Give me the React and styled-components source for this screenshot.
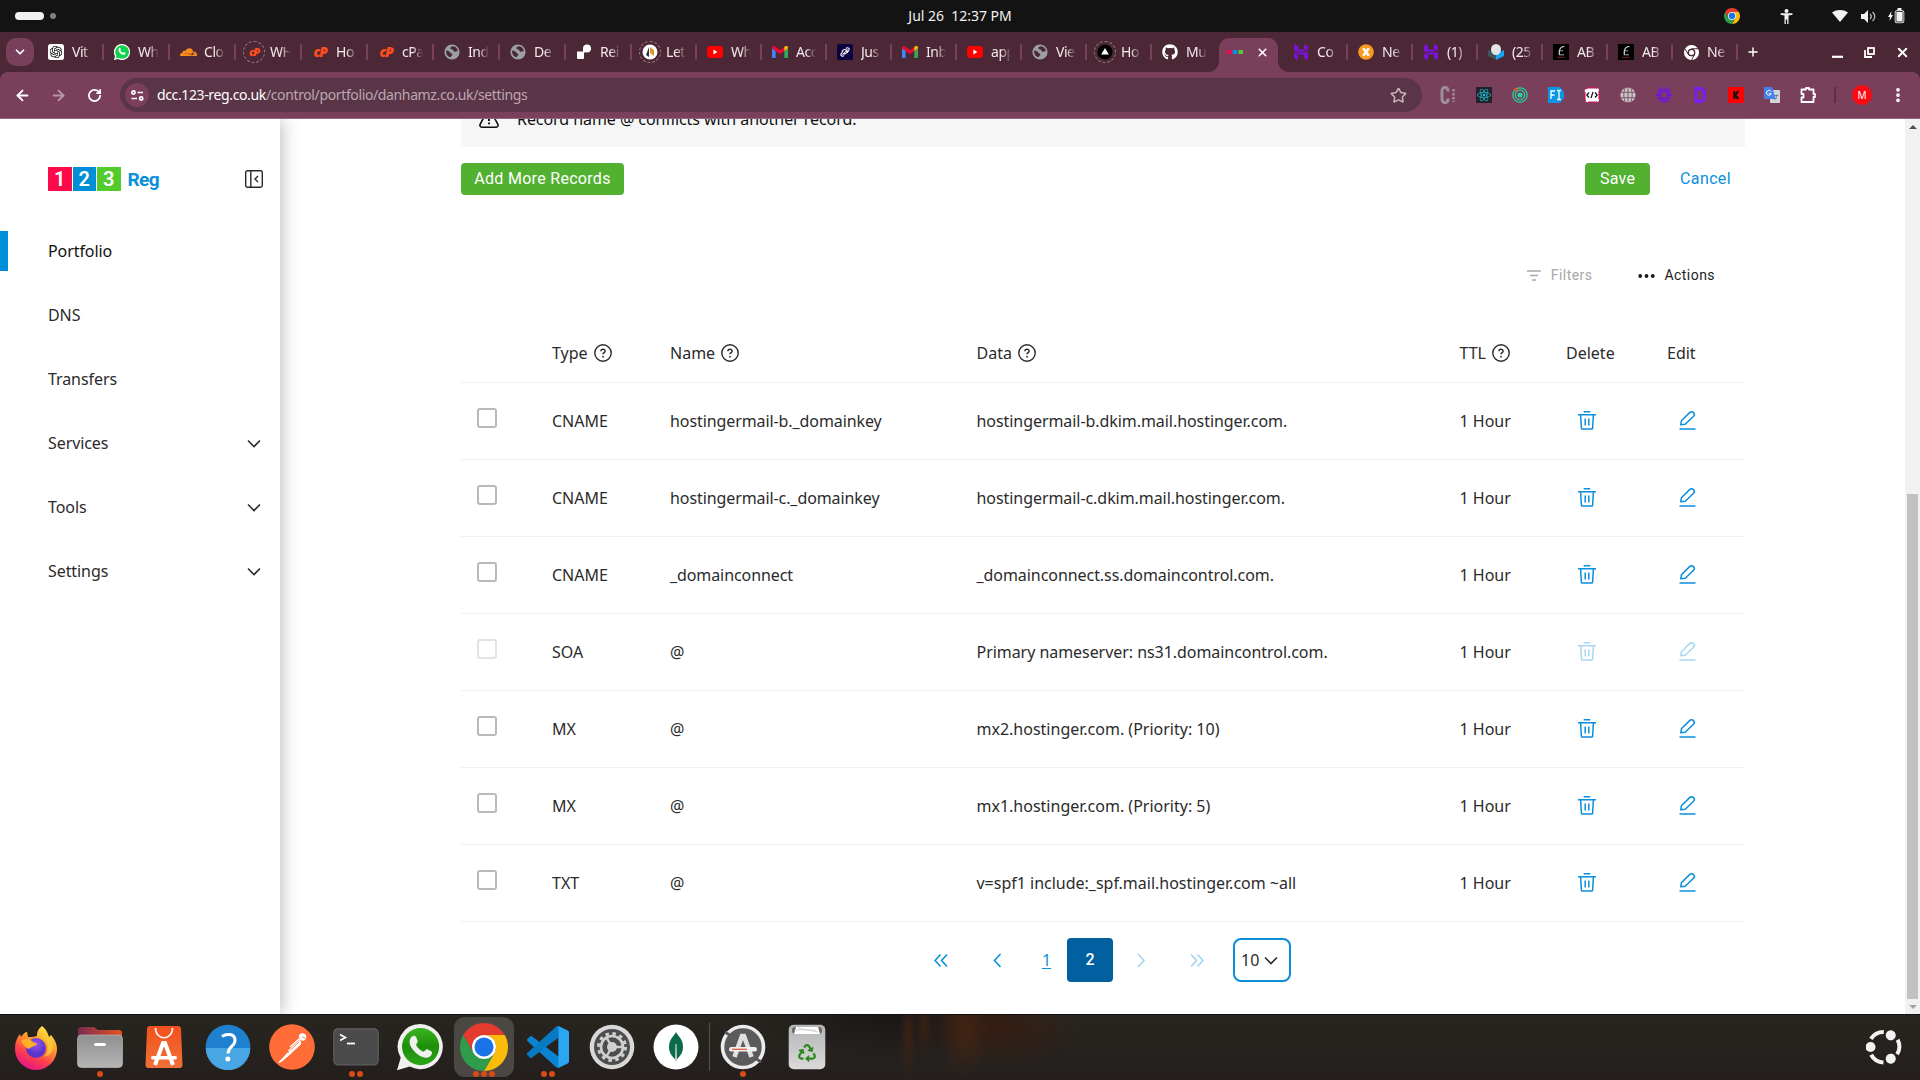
import React from "react";
import styled, { createGlobalStyle, css } from "styled-components";
import { FaGithub, FaReact, FaCloudflare, FaRecycle } from "react-icons/fa";
import { SiOpenai, SiHostinger } from "react-icons/si";
import { ArrowLeft, ArrowRight, RotateCw, Star, EllipsisVertical, Plus, X, ChevronDown } from "lucide-react";

const Global = createGlobalStyle`
  * { box-sizing: border-box; }
  body { margin: 0; background: #fff; overflow: hidden; }
  svg { display: block; flex: none; }
`;

const sans = `"Noto Sans", "Open Sans", sans-serif`;
const rounded = `Roboto, "Noto Sans", sans-serif`;

/* ---------- desktop shell ---------- */
const Screen = styled.div`
  width: 1920px;
  height: 1080px;
  display: flex;
  flex-direction: column;
  font-family: ${sans};
  font-size: 16px;
  color: #2b2b2b;
  overflow: hidden;
`;

const SystemBar = styled.header`
  height: 32px;
  background: #131313;
  color: #f2f2f2;
  display: grid;
  grid-template-columns: 1fr auto 1fr;
  align-items: center;
`;
const Workspaces = styled.div`
  display: flex;
  align-items: center;
  gap: 6px;
  padding-left: 15px;
`;
const WorkspacePill = styled.span`
  width: 29px;
  height: 8px;
  border-radius: 4px;
  background: #f2f2f2;
`;
const WorkspaceDot = styled.span`
  width: 6px;
  height: 6px;
  border-radius: 50%;
  background: #808080;
`;
const Clock = styled.div`
  padding-bottom: 2px;
  font-size: 14px;
  letter-spacing: -0.02px;
  white-space: pre;
`;
const Tray = styled.div`
  display: flex;
  justify-content: flex-end;
  align-items: center;
  padding-right: 10px;
`;
const TrayIcon = styled.span`
  width: ${(p) => p.$w}px;
  margin-right: ${(p) => p.$after || 0}px;
  display: flex;
  justify-content: center;
`;

/* ---------- browser ---------- */
const TabStrip = styled.div`
  height: 40px;
  background: #4c2836;
  display: flex;
  align-items: flex-end;
  padding-left: 6px;
`;
const TabSearch = styled.button`
  width: 28px;
  height: 28px;
  margin: 0 4px 6px 0;
  padding: 0;
  border: 0;
  border-radius: 10px;
  background: #7a3f5b;
  color: #fff;
  display: grid;
  place-items: center;
`;
const Tab = styled.div`
  width: ${(p) => p.$w}px;
  height: 40px;
  padding-left: 10px;
  display: flex;
  align-items: center;
`;
const Favicon = styled.span`
  width: 16px;
  height: 16px;
  display: flex;
  align-items: center;
  justify-content: center;
  flex: none;
`;
const CpanelMark = styled.span`
  color: #ff4f1f;
  font: italic 800 ${(p) => p.$size}px/14px "Open Sans", ${sans};
  letter-spacing: -1.2px;
`;
const Ring = styled.span`
  width: 22px;
  height: 22px;
  margin: -3px;
  border: 1.5px dashed #917883;
  border-radius: 50%;
  display: flex;
  align-items: center;
  justify-content: center;
  flex: none;
`;
const TabTitle = styled.span`
  width: 21px;
  margin-left: 8px;
  font-size: 14px;
  line-height: 20px;
  letter-spacing: -0.45px;
  white-space: nowrap;
  overflow: hidden;
  color: #f3e9ee;
  mask-image: linear-gradient(to right, #000 50%, transparent 100%);
`;
const TabDivider = styled.span`
  width: 2px;
  height: 16px;
  margin-left: ${(p) => p.$gap}px;
  background: #7a3f5b;
`;
const ActiveTab = styled.div`
  width: 59px;
  height: 34px;
  margin: 0 5px 0 2px;
  padding: 0 9px 6px 8px;
  border-radius: 10px 10px 0 0;
  background: #7a3f5b;
  color: #fff;
  display: flex;
  align-items: center;
  justify-content: space-between;
  position: relative;
  &::before, &::after {
    content: "";
    position: absolute;
    bottom: 0;
    width: 10px;
    height: 10px;
  }
  &::before { left: -10px; background: radial-gradient(circle at 0 0, transparent 9.5px, #7a3f5b 10px); }
  &::after { right: -10px; background: radial-gradient(circle at 100% 0, transparent 9.5px, #7a3f5b 10px); }
`;
const WindowControls = styled.div`
  height: 40px;
  margin-left: auto;
  padding-right: 1px;
  display: flex;
  align-items: center;
  color: #fff;
`;
const ControlSlot = styled.span`
  width: ${(p) => p.$w}px;
  display: grid;
  place-items: center;
`;
const NewTab = styled.span`
  height: 40px;
  margin-left: 8px;
  color: #fff;
  display: grid;
  place-items: center;
`;

const ToolbarBack = styled.div`
  background: #4c2836;
`;
const Toolbar = styled.div`
  height: 47px;
  background: #7a3f5b;
  border-radius: 8px 8px 0 0;
  border-bottom: 1px solid #94627a;
  display: flex;
  align-items: center;
  padding-left: 4px;
  color: #fff;
`;
const NavButton = styled.span`
  width: 36px;
  display: grid;
  place-items: center;
  opacity: ${(p) => (p.$dim ? 0.45 : 1)};
`;
const Omnibox = styled.div`
  width: 1302px;
  height: 34px;
  margin-left: 8px;
  padding: 0 15px 0 5px;
  border-radius: 17px;
  background: #5a3547;
  display: flex;
  align-items: center;
`;
const SiteInfo = styled.span`
  width: 24px;
  height: 24px;
  border-radius: 50%;
  background: #7a3f5b;
  display: grid;
  place-items: center;
`;
const Url = styled.span`
  flex: 1;
  margin-left: 8px;
  padding-bottom: 2px;
  font-size: 14px;
  letter-spacing: -0.37px;
  color: #bda6b1;
  b { font-weight: 400; color: #fff; }
`;
const Extensions = styled.div`
  display: flex;
  margin-left: 8px;
`;
const Extension = styled.span`
  width: 36px;
  display: grid;
  place-items: center;
`;
const ToolbarDivider = styled.span`
  width: 2px;
  height: 16px;
  margin-left: 8px;
  background: #5a3045;
`;
const Avatar = styled.span`
  width: 20px;
  height: 20px;
  margin: 0 17px 0 16px;
  border-radius: 50%;
  background: #fb0a12;
  font-size: 10px;
  line-height: 20px;
  text-align: center;
`;

/* ---------- page ---------- */
const Viewport = styled.div`
  height: 895px;
  display: flex;
  background: #fff;
  overflow: hidden;
`;
const Sidebar = styled.aside`
  width: 280px;
  box-shadow: 0 0 18px rgba(0, 0, 0, 0.32);
  background: #fff;
`;
const BrandRow = styled.div`
  height: 24px;
  margin: 48px 17px 0 48px;
  display: flex;
  align-items: flex-start;
  font-family: ${rounded};
`;
const BrandDigit = styled.span`
  width: 23.5px;
  height: 24px;
  margin-right: 1px;
  background: ${(p) => p.$bg};
  color: #fff;
  font-size: 20px;
  font-weight: 600;
  line-height: 24px;
  text-align: center;
`;
const BrandName = styled.span`
  margin-left: 6px;
  flex: 1;
  color: #0a90da;
  font-size: 19px;
  font-weight: 700;
  line-height: 25px;
  letter-spacing: -0.6px;
`;
const CollapseButton = styled.span`
  margin-top: 3px;
`;
const Nav = styled.nav`
  margin-top: 28px;
`;
const NavItem = styled.div`
  height: 64px;
  padding: 0 19px 0 40px;
  display: flex;
  align-items: center;
  justify-content: space-between;
  letter-spacing: -0.08px;
  color: ${(p) => (p.$active ? "#111" : "#2b2b2b")};
  &::before {
    content: "";
    width: 8px;
    height: 40px;
    margin-left: -40px;
    margin-right: 40px;
    background: ${(p) => (p.$active ? "#008ed6" : "transparent")};
  }
`;
const NavLabel = styled.span`
  flex: 1;
`;
const Main = styled.main`
  width: 1284px;
  margin-left: 181px;
`;
const Notice = styled.div`
  height: 28px;
  padding-left: 18px;
  background: #f6f6f6;
  color: #111;
  display: flex;
  align-items: flex-start;
  overflow: hidden;
`;
const NoticeText = styled.span`
  margin: -12px 0 0 18px;
  line-height: 24px;
  letter-spacing: -0.06px;
`;
const NoticeIcon = styled.span`
  margin-top: -10px;
`;
const FormActions = styled.div`
  margin-top: 16px;
  display: flex;
  align-items: center;
  font-family: ${rounded};
`;
const GreenButton = styled.button`
  width: ${(p) => p.$w}px;
  height: 32px;
  padding: 0 0 2px;
  border: 0;
  border-radius: 4px;
  background: #52b131;
  color: #fff;
  font: 400 16px ${rounded};
  letter-spacing: ${(p) => p.$track}px;
`;
const Spacer = styled.span`
  flex: 1;
`;
const CancelLink = styled.a`
  margin: 0 14px 2px 30px;
  color: #0a8fdc;
  letter-spacing: 0.37px;
`;
const TableTools = styled.div`
  height: 48px;
  margin: 56px 30px 25px 0;
  display: flex;
  align-items: center;
  justify-content: flex-end;
  font: 400 14px ${rounded};
`;
const Tool = styled.span`
  display: flex;
  align-items: center;
  gap: ${(p) => p.$gap}px;
  margin-left: ${(p) => p.$before || 0}px;
  letter-spacing: 0.45px;
  color: ${(p) => (p.$off ? "#a9a9a9" : "#1c1c1c")};
`;
const columns = css`
  display: grid;
  grid-template-columns: 91px 118px 306.5px 483px 106.5px 101px 1fr;
  align-items: center;
  border-bottom: 1px solid #f1f1f1;
`;
const HeadRow = styled.div`
  ${columns}
  height: 59px;
`;
const HeadCell = styled.span`
  display: flex;
  align-items: center;
  gap: 6px;
`;
const Row = styled.div`
  ${columns}
  height: 77px;
`;
const Cell = styled.span`
  letter-spacing: ${(p) => (p.$tight ? -p.$tight : 0)}px;
`;
const CheckBox = styled.span`
  width: 20px;
  height: 20px;
  margin: 0 0 6px 16px;
  border: 2px solid ${(p) => (p.$off ? "#e3e3e3" : "#b9b9b9")};
  border-radius: 3px;
  background: #fff;
`;
const IconAction = styled.span`
  padding: 0 0 1px ${(p) => p.$pad}px;
  color: #0a8fdc;
  opacity: ${(p) => (p.$off ? 0.35 : 1)};
`;
const Pager = styled.div`
  height: 44px;
  margin: 16px 0 0 452px;
  display: flex;
  align-items: stretch;
`;
const PageStep = styled.span`
  width: ${(p) => p.$w}px;
  display: grid;
  place-items: center;
  color: #0a8fdc;
  opacity: ${(p) => (p.$off ? 0.38 : 1)};
`;
const PageLink = styled.a`
  width: 41px;
  display: grid;
  place-items: center;
  color: #0a8fdc;
  text-decoration: underline;
  text-underline-offset: 2px;
`;
const PageCurrent = styled.span`
  width: 46px;
  border-radius: 4px;
  background: #0060a0;
  color: #fff;
  font: 500 16px/44px ${rounded};
  text-align: center;
`;
const PageSize = styled.span`
  width: 58px;
  margin-left: 8px;
  padding: 0 11px 0 6px;
  border: 2px solid #0b8fd6;
  border-radius: 8px;
  display: flex;
  align-items: center;
  justify-content: space-between;
`;
const ScrollTrack = styled.div`
  width: 15px;
  margin-left: auto;
  background: #f1f1f1;
  display: flex;
  flex-direction: column;
  align-items: center;
`;
const ScrollThumb = styled.span`
  width: 11px;
  height: 505px;
  margin-top: auto;
  background: #c1c1c1;
`;
const ScrollArrow = styled.span`
  height: 15px;
  display: grid;
  place-items: center;
`;

/* ---------- dock ---------- */
const Dock = styled.footer`
  height: 66px;
  padding: 0 12px 2px 4px;
  border-top: 1px solid #111;
  background:
    radial-gradient(ellipse 9px 44px at 908px 20px, rgba(84, 38, 12, 0.5), transparent),
    radial-gradient(ellipse 9px 34px at 924px 8px, rgba(84, 38, 12, 0.5), transparent),
    radial-gradient(ellipse 26px 50px at 964px 14px, rgba(84, 40, 14, 0.55), transparent),
    radial-gradient(ellipse 80px 38px at 1000px 12px, rgba(62, 28, 14, 0.7), transparent),
    radial-gradient(ellipse 150px 46px at 890px 0, rgba(26, 21, 22, 0.9), transparent),
    linear-gradient(#28251f, #241f1d);
  display: flex;
  align-items: center;
`;
const DockItem = styled.div`
  width: 60px;
  height: 60px;
  margin: 0 2px;
  border-radius: 11px;
  background: ${(p) => (p.$active ? "#4b4844" : "transparent")};
  display: grid;
  place-items: center;
  position: relative;
`;
const DockDots = styled.span`
  position: absolute;
  left: 0;
  right: 0;
  bottom: 0;
  display: flex;
  justify-content: center;
  gap: 2px;
  i { width: 6px; height: 6px; border-radius: 50%; background: #d94a16; }
`;
const DockDivider = styled.span`
  width: 1px;
  height: 48px;
  margin: 0 1px;
  background: #55524e;
`;
const LauncherSlot = styled.span`
  margin-left: auto;
  padding-right: 6px;
`;

/* ---------- drawings ---------- */
const ChromeLogo = ({ size, mono }) => (
  <svg width={size} height={size} viewBox="0 0 48 48">
    <path fill={mono ? "#fff" : "#e33b2e"} d="M24 12H44.78A24 24 0 0 0 3.22 12L13.6 30A12 12 0 0 1 24 12z" />
    <path fill={mono ? "#fff" : "#fbbc09"} d="M34.39 30L24 48A24 24 0 0 0 44.78 12H24A12 12 0 0 1 34.39 30z" />
    <path fill={mono ? "#fff" : "#2d9c4b"} d="M13.6 30L3.22 12A24 24 0 0 0 24 48L34.39 30A12 12 0 0 1 13.6 30z" />
    {mono && <path stroke="#4c2836" strokeWidth="3" fill="none" d="M24 12H45M13.6 30L3 12M34.4 30L24 48" />}
    <circle cx="24" cy="24" r="12" fill={mono ? "#4c2836" : "#fff"} />
    <circle cx="24" cy="24" r={mono ? 8 : 9.5} fill={mono ? "#fff" : "#1a73e8"} />
  </svg>
);

const GmailIcon = () => (
  <svg width="16" height="12" viewBox="0 0 24 18">
    <path fill="#4285f4" d="M0 3v13.4C0 17.3.7 18 1.6 18H5.500V7z" />
    <path fill="#34a853" d="M24 3v13.400c0 .9-.7 1.600-1.600 1.600H18.500V7z" />
    <path fill="#ea0b33" d="M0 3.500V2.500C0 .3 2.400-.8 4 .4l8 6.100 8-6.100V6.200L12 12.500 0 3.500z" />
    <path fill="#fbbc04" d="M18.500 7.500V1.500L20 .4c1.600-1.200 4-.1 4 2.100v1z" />
  </svg>
);

const GlobeFav = () => (
  <svg width="16" height="16" viewBox="0 0 16 16">
    <circle cx="8" cy="8" r="7.600" fill="#9aa0a6" />
    <path fill="#4c2836" d="M2.200 6.500c2 .2 3.600.8 4.200 2.200.5 1 2 .6 2 2 0 1-1.600 1-1.600 2.600C3.800 13 1.600 10 2.200 6.500zM9 2.200c-1.800.4-2.800 1-2.600 2.300.3 1 1.600.6 2.400 1.200.9.6.6 1.800 1.800 2.100 1 .2 1.600-.6 3.200-.4C13.800 4.600 11.600 2.500 9 2.200z" />
  </svg>
);

const YouTubeFav = () => (
  <svg width="16" height="12" viewBox="0 0 16 12">
    <rect width="16" height="12" rx="3" fill="#f00" />
    <path d="M6.400 3.500l4 2.500-4 2.500z" fill="#fff" />
  </svg>
);

const WhatsDot = () => (
  <svg width="16" height="16" viewBox="0 0 16 16">
    <path fill="#fff" d="M8 0a8 8 0 1 1-3.800 15L0 16l1-4A8 8 0 0 1 8 0z" />
    <path fill="#10d04c" d="M8 1.200a6.800 6.800 0 1 1-3.600 12.500l-2.700.7.700-2.700A6.800 6.800 0 0 1 8 1.200z" />
    <path fill="#fff" d="M5 4.200c.6-.6 1.200-.5 1.500.3l.4 1-.6.900c.7 1.300 1.600 2 2.700 2.400l.8-.8c.8.4 1.700.6 1.600 1.300-.1 1.300-1.600 1.800-2.800 1.400C6.500 10.100 4.900 8.300 4.500 6.200c0-.8 0-1.400.5-2z" />
  </svg>
);

const AbFav = () => (
  <svg width="16" height="16" viewBox="0 0 16 16">
    <rect width="16" height="16" fill="#000" />
    <path d="M11.500 2.500C8 2.500 6.800 4.500 6.300 7v4" stroke="#d9d9d9" strokeWidth="1.200" fill="none" />
    <path d="M7 6.800h3M6 10.800h5" stroke="#a5a5a5" strokeWidth="1" fill="none" />
    <path d="M4 13.300h8" stroke="#8d2020" strokeWidth=".9" />
  </svg>
);

const favicons = {
  gpt: <svg width="16" height="16" viewBox="0 0 16 16"><rect width="16" height="16" rx="2.500" fill="#fff" /><g transform="translate(1.700 1.700)"><SiOpenai size={12.600} color="#111" /></g></svg>,
  wa: <WhatsDot />,
  cf: <FaCloudflare size={17} color="#f98a1c" />,
  cpRing: <Ring><CpanelMark $size={11}>cP</CpanelMark></Ring>,
  cp: <CpanelMark $size={13.5}>cP</CpanelMark>,
  globe: <GlobeFav />,
  render: (
    <svg width="16" height="16" viewBox="0 0 16 16">
      <path fill="#fff" d="M1 7.500h7V14a1 1 0 0 1-1 1H2a1 1 0 0 1-1-1zM7 8.500V5l3-1 1.500 3-2.500 1.500z" />
      <circle cx="11" cy="4.500" r="4" fill="#fff" />
    </svg>
  ),
  letRing: <Ring><svg width="16" height="16" viewBox="-8 -8 16 16"><circle r="7.500" fill="#fff" /><path d="M-1-5L-4 3l3 2z" fill="#333" /><path d="M0-5l4 3v6l-4-3z" fill="#dd9a2c" /></svg></Ring>,
  yt: <YouTubeFav />,
  gmail: <GmailIcon />,
  just: <svg width="16" height="16" viewBox="0 0 16 16"><rect width="16" height="16" rx="1.500" fill="#0c0440" /><path d="M9 4.500c1-1.500 4-.5 3 1.500l-2 3M7 11.500c-1 1.500-4 .5-3-1.500l2-3M10.500 5.500L5.500 11M5 7.500C6 5 9 5 10 7c.5 2-2 3.500-4 2.500" stroke="#fff" strokeWidth="1.100" fill="none" /></svg>,
  triRing: <Ring><svg width="16" height="16" viewBox="-8 -8 16 16"><circle r="7.600" fill="#000" /><path d="M0-4l3.800 6.600h-7.600z" fill="#fff" /></svg></Ring>,
  gh: <FaGithub size={16} color="#fff" />,
  h: <SiHostinger size={16} color="#7d12e0" />,
  x: <svg width="16" height="16" viewBox="0 0 16 16"><circle cx="8" cy="8" r="7.800" fill="#f79a1d" /><path d="M5.200 4.200L10.800 11.800M10.800 4.200L5.200 11.800" stroke="#fff" strokeWidth="2.400" /></svg>,
  egg: <svg width="16" height="16" viewBox="0 0 16 16"><path d="M0 6l8 4v6l-8-4z" fill="#3f5560" /><path d="M16 6l-8 4v6l8-4z" fill="#12a5f5" /><ellipse cx="8" cy="5.500" rx="5" ry="5.500" fill="#e4e4e4" /></svg>,
  ab: <AbFav />,
  chrome: <ChromeLogo size={15} mono />,
};

const HelpIcon = () => (
  <svg width="18" height="18" viewBox="0 0 18 18" fill="none" stroke="#2b2b2b">
    <circle cx="9" cy="9" r="8.200" strokeWidth="1.400" />
    <path d="M6.900 7.200c0-2.800 4.300-2.600 4.200 0 0 1.500-2.100 1.500-2.100 3.100" strokeWidth="1.500" />
    <circle cx="9" cy="12.700" r=".6" fill="#2b2b2b" strokeWidth=".7" />
  </svg>
);

const TrashIcon = () => (
  <svg width="18" height="19" viewBox="0 0 18 19" fill="none" stroke="currentColor" strokeWidth="1.500">
    <path d="M0 3.700h18M5.700.800h6.600M2.600 4l.8 13.200c0 .5.400.9.900.9h9.400c.5 0 .9-.4.900-.9L15.400 4M7.200 7.500v7M10.800 7.500v7" />
  </svg>
);

const PencilIcon = () => (
  <svg width="17" height="19" viewBox="0 0 17 19" fill="none" stroke="currentColor" strokeWidth="1.500" strokeLinejoin="round">
    <path d="M1.800 13.800l.6-4L10.600 1.600c1.300-1.300 3-.9 3.900 0s1.200 2.500 0 3.700L6.200 13.300z" />
    <path d="M.5 18h16" />
  </svg>
);

const Chevron = ({ dir = "down", double, w = 14, color = "currentColor" }) => {
  const d = {
    down: "M1 1.500l6 6 6-6",
    left: double ? "M6.500 1L1 7l5.500 6M13 1L7.500 7l5.500 6" : "M7.500 1L1.500 7.500l6 6.500",
    right: double ? "M1 1l5.500 6L1 13M7.500 1L13 7l-5.500 6" : "M1 1l6 6.500L1 14",
  }[dir];
  return (
    <svg width={dir === "down" ? w : double ? 14 : 9} height={dir === "down" ? 9 : 15} fill="none" stroke={color} strokeWidth="1.600" viewBox={dir === "down" ? "0 0 14 9" : double ? "0 0 14 14" : "0 0 9 15"}>
      <path d={d} />
    </svg>
  );
};

/* ---------- dock drawings ---------- */
const Firefox = () => (
  <svg width="44" height="46" viewBox="0 0 44 46">
    <defs>
      <linearGradient id="ff" x1=".8" y1="0" x2=".3" y2="1">
        <stop offset="0" stopColor="#fff04a" /><stop offset=".35" stopColor="#ffa52a" /><stop offset=".7" stopColor="#ff3f4e" /><stop offset="1" stopColor="#e0128a" />
      </linearGradient>
      <radialGradient id="ffp" cx=".5" cy=".3"><stop offset="0" stopColor="#9a55f0" /><stop offset="1" stopColor="#5a35c8" /></radialGradient>
    </defs>
    <path fill="url(#ff)" d="M28 2c5 4 6 8 7 11l2-2c4 5 6 9 6 14a21 21 0 0 1-42 0c0-7 2-11 5-15l1 3c2-3 4-5 6-5l1 5c3 0 6 0 9-1 0-4 1-7 5-10z" />
    <circle cx="22" cy="24" r="10" fill="url(#ffp)" />
    <path fill="#ffb026" d="M7 17c4-3 8-2 11 0 1 2 4 1 5 3-2 3-6 2-8 5-3-1-6-4-8-8z" />
    <path fill="#ffd23a" d="M28 13c8 5 7 15 2 20 7-1 11-8 8-15-2-4-5-6-8-7z" opacity=".7" />
  </svg>
);
const Files = () => (
  <svg width="46" height="42" viewBox="0 0 46 42">
    <defs>
      <linearGradient id="fo"><stop offset="0" stopColor="#7a2a52" /><stop offset="1" stopColor="#e65320" /></linearGradient>
      <linearGradient id="fg" x2="0" y2="1"><stop offset="0" stopColor="#8f8f8f" /><stop offset="1" stopColor="#b5b5b5" /></linearGradient>
    </defs>
    <path fill="url(#fo)" d="M1 14V4a3 3 0 0 1 3-3h13l4 3h21a3 3 0 0 1 3 3v8z" />
    <rect x=".5" y="9" width="45" height="32.500" rx="4" fill="url(#fg)" stroke="#c4c4c4" strokeWidth=".6" />
    <rect x="17" y="17" width="12" height="3" rx="1.500" fill="#fff" />
  </svg>
);
const Software = () => (
  <svg width="38" height="44" viewBox="0 0 38 44">
    <defs><linearGradient id="so" x2="0" y2="1"><stop offset="0" stopColor="#f4511c" /><stop offset="1" stopColor="#ef7038" /></linearGradient></defs>
    <path fill="url(#so)" d="M5 1h28a3 3 0 0 1 3 3l1.500 36a3 3 0 0 1-3 3h-31a3 3 0 0 1-3-3L2 4a3 3 0 0 1 3-3z" />
    <path d="M10.500 3c0 13 17 13 17 0" stroke="#fff" strokeWidth="1.600" fill="none" />
    <path d="M10 40l8-22h2l8 22" stroke="#fff" strokeWidth="4" fill="none" /><rect x="6" y="31" width="26" height="3.600" rx="1.800" fill="#fff" />
  </svg>
);
const Help = () => (
  <svg width="46" height="46" viewBox="0 0 46 46">
    <circle cx="23" cy="23" r="22.300" fill="#1f80cf" />
    <path d="M.7 24a22.300 22.300 0 0 0 44.600 0z" fill="#49a6e4" />
    <path d="M17 12.500c4-3 13-3.500 13 4 0 6-7 6-7 13" stroke="#fff" strokeWidth="3" fill="none" />
    <circle cx="22.800" cy="35" r="2.500" fill="#fff" />
  </svg>
);
const Postman = () => (
  <svg width="46" height="46" viewBox="0 0 46 46">
    <circle cx="23" cy="23" r="22.800" fill="#ff6c37" />
    <circle cx="33.500" cy="13" r="3.700" fill="#fff" />
    <path d="M31 15.500L19 26.500l3 3 10-9zM18.500 28.500l-8 9 1.500.8L23 29z" fill="#fff" />
    <path d="M32 18.500L21 28.500l-11 10M30 15l-9 8" stroke="#fff" strokeWidth="1.400" fill="none" />
    <path d="M30 18l-9 8.500" stroke="#ff6c37" strokeWidth=".8" />
    <path d="M33.500 13l3 1.500" stroke="#ff6c37" strokeWidth=".8" />
  </svg>
);
const Terminal = () => (
  <svg width="46" height="38" viewBox="0 0 46 38">
    <rect x=".8" y=".8" width="44.400" height="36" rx="4" fill="#4a4a4a" stroke="#5f5f5f" strokeWidth="1.200" />
    <path d="M7 6.500l5.500 3L7 12.500" stroke="#fff" strokeWidth="1.600" fill="none" /><path d="M14 15.500h8" stroke="#fff" strokeWidth="1.800" />
  </svg>
);
const WhatsApp = () => (
  <svg width="48" height="48" viewBox="0 0 48 48">
    <defs><linearGradient id="wa" x2="0" y2="1"><stop offset="0" stopColor="#3ab51f" /><stop offset=".5" stopColor="#1d8f0a" /><stop offset="1" stopColor="#2ca51a" /></linearGradient></defs>
    <path fill="#f0f0f0" d="M24.500 1a22.600 22.600 0 1 1-10.800 42.600L1 47.200l3.700-12.400A22.600 22.600 0 0 1 24.500 1z" />
    <circle cx="24.600" cy="23.600" r="18.600" fill="url(#wa)" />
    <path fill="#f0f0f0" d="M15 14.500c2-2.500 4.500-2 5.300 0l1.400 3.400c.6 1.500-2 3-1.600 4 1.700 3.300 4 5.400 7.400 6.800 1 .3 2.200-3 3.700-2.400l4 1.900c1.700.9.400 4-1.200 5.200-5 3.300-11.500-.6-15.500-4.900-4.200-4.500-6.600-9.500-3.500-14z" />
  </svg>
);
const VsCode = () => (
  <svg width="42" height="42" viewBox="0 0 24 24">
    <path fill="#0a84d2" d="M23.150 2.587L18.210.21a1.494 1.494 0 0 0-1.705.29l-9.460 8.630-4.120-3.128a.999.999 0 0 0-1.276.057L.327 7.261A1 1 0 0 0 .326 8.740L3.899 12 .326 15.260a1 1 0 0 0 .001 1.479L1.650 17.940a.999.999 0 0 0 1.276.057l4.120-3.128 9.460 8.630a1.492 1.492 0 0 0 1.704.29l4.942-2.377A1.500 1.500 0 0 0 24 20.060V3.939a1.500 1.500 0 0 0-.85-1.352zm-5.146 14.861L10.826 12l7.178-5.448v10.896z" />
    <path fill="#2aa7f0" d="M18 .2l5.150 2.387A1.500 1.500 0 0 1 24 3.940v16.120a1.500 1.500 0 0 1-.85 1.350L18 23.800z" />
    <path fill="#0668a8" d="M3.900 12L.4 15.300a1 1 0 0 0 0 1.400l1.250 1.240a1 1 0 0 0 1.270 0L10.800 12 7 9.130z" opacity=".35" />
    <path fill="#0668a8" d="M18 .3v6.250L10.826 12 7.045 9.130l9.460-8.630z" opacity=".35" />
  </svg>
);
const Gear = () => (
  <svg width="46" height="46" viewBox="-23 -23 46 46">
    <circle r="22.300" fill="#d8d8d8" /><circle r="18" fill="#4d4d4d" />
    <circle r="13.500" fill="none" stroke="#cfcfcf" strokeWidth="3" strokeDasharray="3.530 3.540" />
    <circle r="11" fill="none" stroke="#cfcfcf" strokeWidth="2.600" />
    <circle r="5" fill="#cfcfcf" />
    <path d="M0 0h10M0 0l-5 8.700M0 0l-5-8.700" stroke="#cfcfcf" strokeWidth="2.400" />
  </svg>
);
const Mongo = () => (
  <svg width="46" height="46" viewBox="0 0 46 46">
    <circle cx="23" cy="23" r="22.500" fill="#fff" />
    <path d="M23 8c2 4 7 7 7 15 0 6-3 9-6.300 12.500h-1.400C19 32 16 29 16 23c0-8 5-11 7-15z" fill="#0a6b4a" />
    <path d="M22.400 20h1.200l.4 17h-2z" fill="#c2cfc0" />
  </svg>
);
const Updater = () => (
  <svg width="46" height="46" viewBox="-23 -23 46 46">
    <circle r="22" fill="#5b5b5b" /><circle r="20.500" fill="none" stroke="#ececec" strokeWidth="3.600" />
    <path d="M-18-15l6 4M18 15l-6-4" stroke="#5b5b5b" strokeWidth="3" />
    <path d="M-8.500 10l7.500-21h2l7.500 21" stroke="#e0e0e0" strokeWidth="4.600" fill="none" />
    <rect x="-14" y="0" width="28" height="4.600" rx="2.300" fill="#f2f2f2" /><path d="M-11 2.300H4" stroke="#e2502a" strokeWidth="1.200" />
  </svg>
);
const Trash = () => (
  <svg width="38" height="46" viewBox="0 0 38 46">
    <defs><linearGradient id="tr" x2="0" y2="1"><stop offset="0" stopColor="#b5b5b5" /><stop offset="1" stopColor="#dadada" /></linearGradient></defs>
    <rect x=".7" y=".7" width="36.600" height="44.600" rx="5" fill="url(#tr)" />
    <rect x="4" y="3" width="30" height="7" rx="3" fill="#6e6e6e" />
    <path d="M6 10l2-7h22l2 7z" fill="#fff" /><path d="M8 6h20M10 4l20 4" stroke="#bbb" strokeWidth=".6" />
    <g transform="translate(10 20)"><FaRecycle size={18} color="#2b8a1e" /></g>
  </svg>
);
const UbuntuMark = () => (
  <svg width="36" height="36" viewBox="-18 -18 36 36" fill="none" stroke="#f2f2f2" strokeWidth="4">
    {[60, 180, 300].map((a) => (
      <g key={a} transform={`rotate(${-a})`}>
        <path d="M13.500 7.500A15 15 0 0 1 1 15" transform="rotate(3)" />
        <circle cx="13.500" cy="0" r="5" fill="#f2f2f2" stroke="none" />
      </g>
    ))}
  </svg>
);

/* ---------- data ---------- */
const leftTabs = [
  ["gpt", "Vit"], ["wa", "Wh"], ["cf", "Clo"], ["cpRing", "WH"], ["cp", "Ho"], ["cp", "cPa"],
  ["globe", "Ind"], ["globe", "De"], ["render", "Rei"], ["letRing", "Let"], ["yt", "Wh"], ["gmail", "Acc"],
  ["just", "Jus"], ["gmail", "Inb"], ["yt", "app"], ["globe", "Vie"], ["triRing", "Ho"], ["gh", "Mu"],
];
const rightTabs = [["h", "Co"], ["x", "Ne"], ["h", "(1)"], ["egg", "(25"], ["ab", "AB"], ["ab", "AB"], ["chrome", "Ne"]];

const navItems = [["Portfolio"], ["DNS"], ["Transfers"], ["Services", true], ["Tools", true], ["Settings", true]];

const records = [
  { type: "CNAME", name: "hostingermail-b._domainkey", data: "hostingermail-b.dkim.mail.hostinger.com.", tight: 0.06 },
  { type: "CNAME", name: "hostingermail-c._domainkey", data: "hostingermail-c.dkim.mail.hostinger.com.", tight: 0.06 },
  { type: "CNAME", name: "_domainconnect", data: "_domainconnect.ss.domaincontrol.com.", tight: 0.06 },
  { type: "SOA", name: "@", data: "Primary nameserver: ns31.domaincontrol.com.", tight: 0.05, off: true },
  { type: "MX", name: "@", data: "mx2.hostinger.com. (Priority: 10)" },
  { type: "MX", name: "@", data: "mx1.hostinger.com. (Priority: 5)" },
  { type: "TXT", name: "@", data: "v=spf1 include:_spf.mail.hostinger.com ~all", tight: 0.01 },
];

const extensionIcons = [
  <svg width="16" height="18" viewBox="0 0 16 18" stroke="#9d8f97" fill="none"><path d="M8 5.500C8 0 2 0 2 5v8c0 5 6 5 6-.500" strokeWidth="3" /><path d="M13.500 3v13" strokeWidth="2.500" strokeDasharray="2.500 1.500" /></svg>,
  <svg width="16" height="16" viewBox="0 0 16 16"><rect width="16" height="16" fill="#20232a" /><g transform="translate(1 1)"><FaReact size={14} color="#1fc4dd" /></g></svg>,
  <svg width="16" height="16" viewBox="0 0 16 16" fill="none" stroke="#1fd79a" strokeWidth="1.200"><circle cx="8" cy="8" r="7.200" /><circle cx="8" cy="8" r="4.800" /><circle cx="8" cy="8" r="2" fill="#1fd79a" /><circle cx="4" cy="2.300" r="1.600" fill="#f4511e" stroke="none" /></svg>,
  <svg width="16" height="16" viewBox="0 0 16 16"><path d="M0 0h12l4 5v6l-4 5H0z" fill="#0a96e4" /><path d="M3 12V4h4M3 8h3.500M9 3.500h4M9 12.500h4M11 3.500v9" stroke="#fff" strokeWidth="1.300" fill="none" /></svg>,
  <svg width="16" height="16" viewBox="0 0 16 16"><rect x=".8" y=".8" width="14.400" height="14.400" rx="3.500" fill="#fff" stroke="#c01a5c" strokeWidth="1.500" strokeDasharray="9 3" /><path d="M5 5.500L2.800 8 5 10.500M11 5.500L13.200 8 11 10.500M9 5l-2 6" stroke="#111" strokeWidth="1.200" fill="none" /></svg>,
  <svg width="16" height="16" viewBox="0 0 16 16"><circle cx="8" cy="8" r="7.600" fill="#c9c4c6" /><path d="M0 5.300h16M0 10.700h16M8 0v16M5.300.8c-2 4.600-2 9.800 0 14.400M10.700.8c2 4.600 2 9.800 0 14.400" stroke="#7a4a60" strokeWidth=".9" fill="none" /></svg>,
  <svg width="18" height="18" viewBox="-9 -9 18 18" stroke="#6f15e6" strokeWidth="1.900">{[0, 30, 60, 90, 120, 150, 180, 210, 240, 270, 300, 330].map((a) => <path key={a} d="M3 0H8" transform={`rotate(${a})`} />)}</svg>,
  <svg width="14" height="16" viewBox="0 0 14 16"><path d="M3 1.500h5.500l3 3v7l-3 3H3z" fill="none" stroke="#7a1cf5" strokeWidth="3" /></svg>,
  <svg width="16" height="16" viewBox="0 0 16 16"><rect width="16" height="16" fill="#f00" /><path d="M6.300 4v8M10.500 4L7 8l3.500 4" stroke="#111" strokeWidth="2" fill="none" /></svg>,
  <svg width="16" height="16" viewBox="0 0 16 16"><rect x="6" y="3" width="10" height="13" rx="1" fill="#d2d6da" /><path d="M0 1a1 1 0 0 1 1-1h7l4 12H1a1 1 0 0 1-1-1z" fill="#4a80ea" /><path d="M7 4.500a2.400 2.400 0 1 0 .2 2.200H5" stroke="#fff" strokeWidth="1" fill="none" /><path d="M10.500 8.500h4M12.500 7.500c1 3-1 5-2 5.500" stroke="#6d7a80" strokeWidth=".9" fill="none" /></svg>,
  <svg width="18" height="18" viewBox="0 0 18 18" fill="none" stroke="#fff" strokeWidth="1.800"><path d="M2.500 3.500H7V2h3v1.500h4.500V8H16v3h-1.500v5H2.500v-4.500h2V8h-2z" strokeLinejoin="round" /></svg>,
];

const dockIcons = [
  [<Firefox />, 0], [<Files />, 1], [<Software />, 0], [<Help />, 0], [<Postman />, 0], [<Terminal />, 2],
  [<WhatsApp />, 0], [<ChromeLogo size={48} />, 3, true], [<VsCode />, 2], [<Gear />, 0], [<Mongo />, 0],
];
const dockTail = [[<Updater />, 1], [<Trash />, 0]];

const renderDock = ([icon, dots, active], i) => (
  <DockItem key={i} $active={active}>
    {icon}
    {dots > 0 && <DockDots>{Array.from({ length: dots }, (_, k) => <i key={k} />)}</DockDots>}
  </DockItem>
);

const renderTab = (width, gap, last) => ([icon, title], i) => (
  <Tab key={i} $w={width(i)}>
    <Favicon>{favicons[icon]}</Favicon>
    <TabTitle>{title}</TabTitle>
    {!last(i) && <TabDivider $gap={gap} />}
  </Tab>
);

export default function App() {
  return (
    <Screen>
      <Global />
      <SystemBar>
        <Workspaces><WorkspacePill /><WorkspaceDot /></Workspaces>
        <Clock>Jul 26  12:37 PM</Clock>
        <Tray>
          <TrayIcon $w={54}><ChromeLogo size={16} /></TrayIcon>
          <TrayIcon $w={54} $after={13}>
            <svg width="13" height="15" viewBox="0 0 13 15" fill="#f2f2f2"><circle cx="6.500" cy="2" r="2" /><path d="M.5 4.300h12v1.500L8.500 6.500V15H7.200v-4.500H5.800V15H4.500V6.500L.5 5.800z" /></svg>
          </TrayIcon>
          <TrayIcon $w={28}>
            <svg width="16" height="12" viewBox="0 0 16 12" fill="#f2f2f2"><path d="M8 12L0 2.500C4.500-.8 11.500-.8 16 2.500z" /></svg>
          </TrayIcon>
          <TrayIcon $w={28}>
            <svg width="15" height="13" viewBox="0 0 15 13" fill="#f2f2f2"><path d="M0 4h3l4-4v13L3 9H0z" /><path d="M9 4c1.500 1.500 1.500 3.500 0 5M11.500 2c3 2.500 3 6.500 0 9" fill="none" stroke="#bbb" strokeWidth="1.300" /></svg>
          </TrayIcon>
          <TrayIcon $w={28}>
            <svg width="17" height="16" viewBox="0 0 17 16"><path d="M3.500 3L0 9h2l-.5 4L5 7H3z" fill="#f2f2f2" /><rect x="7.200" y="2.700" width="8.600" height="12" rx="1.500" fill="#f2f2f2" stroke="#f2f2f2" /><rect x="8" y="3.500" width="7" height="10.400" rx=".8" fill="none" stroke="#131313" strokeWidth=".8" /><rect x="9.500" y="0" width="4" height="2" fill="#f2f2f2" /></svg>
          </TrayIcon>
        </Tray>
      </SystemBar>

      <TabStrip>
        <TabSearch><ChevronDown size={14} strokeWidth={3} /></TabSearch>
        {leftTabs.map(renderTab((i) => (i < 9 ? 66 : 65), 9, (i) => i === 17))}
        <ActiveTab>
          <svg width="16" height="4" viewBox="0 0 16 4"><rect width="4.500" height="4" fill="#f5094c" /><rect x="5.700" width="4.500" height="4" fill="#0a90da" /><rect x="11.500" width="4.500" height="4" fill="#52cf2e" /></svg>
          <X size={13} strokeWidth={3} />
        </ActiveTab>
        {rightTabs.map(renderTab(() => 65, 8, () => false))}
        <NewTab><Plus size={14} strokeWidth={2.500} /></NewTab>
        <WindowControls>
          <ControlSlot $w={32}><svg width="11" height="12" viewBox="0 0 11 12"><path d="M0 10.800h11" stroke="#fff" strokeWidth="2.200" /></svg></ControlSlot>
          <ControlSlot $w={32}><svg width="11" height="11" viewBox="0 0 11 11" fill="none" stroke="#fff"><rect x="4" y="1" width="6" height="6" strokeWidth="1.800" /><path d="M1 3v7h7" strokeWidth="1.800" /></svg></ControlSlot>
          <ControlSlot $w={34}><X size={15} strokeWidth={3} /></ControlSlot>
        </WindowControls>
      </TabStrip>

      <ToolbarBack>
        <Toolbar>
          <NavButton><ArrowLeft size={17} strokeWidth={2.600} /></NavButton>
          <NavButton $dim><ArrowRight size={17} strokeWidth={2.600} /></NavButton>
          <NavButton><RotateCw size={15} strokeWidth={2.800} /></NavButton>
          <Omnibox>
            <SiteInfo>
              <svg width="13" height="11" viewBox="0 0 13 11" fill="none" stroke="#fff" strokeWidth="1.700"><circle cx="2.500" cy="2.500" r="1.600" /><path d="M6.500 2.500H12M.5 8.500H6" /><circle cx="10.200" cy="8.500" r="1.600" /></svg>
            </SiteInfo>
            <Url><b>dcc.123-reg.co.uk</b>/control/portfolio/danhamz.co.uk/settings</Url>
            <Star size={17} color="#c8b4be" strokeWidth={2.200} />
          </Omnibox>
          <Extensions>{extensionIcons.map((icon, i) => <Extension key={i}>{icon}</Extension>)}</Extensions>
          <ToolbarDivider />
          <Avatar>M</Avatar>
          <EllipsisVertical size={18} strokeWidth={3} />
        </Toolbar>
      </ToolbarBack>

      <Viewport>
        <Sidebar>
          <BrandRow>
            <BrandDigit $bg="#fd0a4b">1</BrandDigit>
            <BrandDigit $bg="#008ed6">2</BrandDigit>
            <BrandDigit $bg="#52cb2c">3</BrandDigit>
            <BrandName>Reg</BrandName>
            <CollapseButton>
              <svg width="18" height="18" viewBox="0 0 18 18" fill="none" stroke="#2b2b2b" strokeWidth="1.400"><rect x=".7" y=".7" width="16.600" height="16.600" rx="1.800" /><path d="M5.800 1v16M13 6l-3 3 3 3" /></svg>
            </CollapseButton>
          </BrandRow>
          <Nav>
            {navItems.map(([label, open], i) => (
              <NavItem key={label} $active={i === 0}>
                <NavLabel>{label}</NavLabel>
                {open && <Chevron />}
              </NavItem>
            ))}
          </Nav>
        </Sidebar>

        <Main>
          <Notice>
            <NoticeIcon>
              <svg width="20" height="19" viewBox="0 0 20 19" fill="none" stroke="#111" strokeWidth="1.600"><path d="M8.300 2a2 2 0 0 1 3.400 0l7.200 13.300a2 2 0 0 1-1.700 2.900H2.800a2 2 0 0 1-1.700-2.900z" /><path d="M10 6.500V12M10 13.500v1.800" strokeWidth="2" /></svg>
            </NoticeIcon>
            <NoticeText>Record name @ conflicts with another record.</NoticeText>
          </Notice>
          <FormActions>
            <GreenButton $w={163} $track={0.3}>Add More Records</GreenButton>
            <Spacer />
            <GreenButton $w={65} $track={0.2}>Save</GreenButton>
            <CancelLink>Cancel</CancelLink>
          </FormActions>
          <TableTools>
            <Tool $off $gap={10}>
              <svg width="14" height="11" viewBox="0 0 14 11" stroke="#a9a9a9" strokeWidth="1.300"><path d="M0 1h14M3 5.500h8M5 10h4" /></svg>
              Filters
            </Tool>
            <Tool $gap={9} $before={46}>
              <svg width="17" height="5" viewBox="0 0 17 5" fill="#1c1c1c"><circle cx="2.200" cy="3" r="1.900" /><circle cx="8.500" cy="3" r="1.900" /><circle cx="14.800" cy="3" r="1.900" /></svg>
              Actions
            </Tool>
          </TableTools>
          <HeadRow>
            <HeadCell />
            <HeadCell>Type <HelpIcon /></HeadCell>
            <HeadCell>Name <HelpIcon /></HeadCell>
            <HeadCell>Data <HelpIcon /></HeadCell>
            <HeadCell>TTL <HelpIcon /></HeadCell>
            <HeadCell>Delete</HeadCell>
            <HeadCell>Edit</HeadCell>
          </HeadRow>
          {records.map(({ type, name, data, tight, off }, i) => (
            <Row key={i}>
              <CheckBox $off={off} />
              <Cell>{type}</Cell>
              <Cell $tight={tight && 0.09}>{name}</Cell>
              <Cell $tight={tight}>{data}</Cell>
              <Cell>1 Hour</Cell>
              <IconAction $pad={12} $off={off}><TrashIcon /></IconAction>
              <IconAction $pad={12} $off={off}><PencilIcon /></IconAction>
            </Row>
          ))}
          <Pager>
            <PageStep $w={56}><Chevron dir="left" double /></PageStep>
            <PageStep $w={57}><Chevron dir="left" /></PageStep>
            <PageLink>1</PageLink>
            <PageCurrent>2</PageCurrent>
            <PageStep $w={56} $off><Chevron dir="right" /></PageStep>
            <PageStep $w={56} $off><Chevron dir="right" double /></PageStep>
            <PageSize>10 <Chevron color="#2b2b2b" /></PageSize>
          </Pager>
        </Main>

        <ScrollTrack>
          <ScrollArrow><svg width="8" height="4" viewBox="0 0 8 4"><path d="M4 0l4 4H0z" fill="#505050" /></svg></ScrollArrow>
          <ScrollThumb />
          <ScrollArrow><svg width="8" height="4" viewBox="0 0 8 4"><path d="M4 4l4-4H0z" fill="#a3a3a3" /></svg></ScrollArrow>
        </ScrollTrack>
      </Viewport>

      <Dock>
        {dockIcons.map(renderDock)}
        <DockDivider />
        {dockTail.map(renderDock)}
        <LauncherSlot><UbuntuMark /></LauncherSlot>
      </Dock>
    </Screen>
  );
}
